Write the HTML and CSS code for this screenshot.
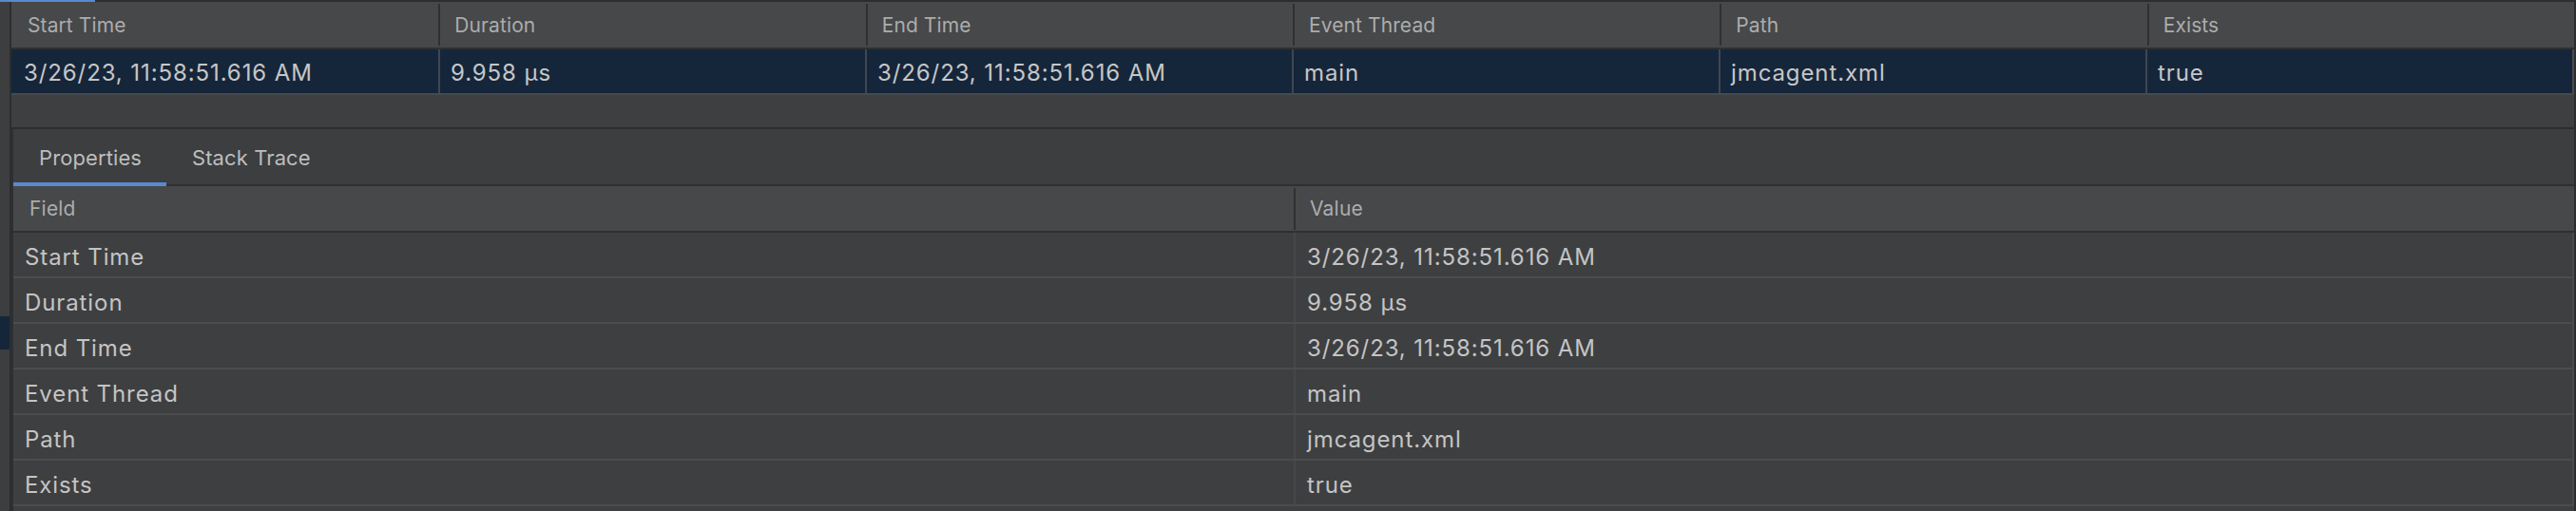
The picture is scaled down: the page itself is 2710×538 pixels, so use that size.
FILE: index.html
```html
<!DOCTYPE html>
<html>
<head>
<meta charset="utf-8">
<link rel="stylesheet" href="styles.css">
</head>
<body>
<div class="topline"><div class="topline-accent"></div></div>
<div class="frame">
  <div class="sidebar"><div class="sidebar-sel"></div></div>
  <div class="content">
    <div class="events">
      <div class="ev-head">
        <div class="ev-hcell">Start Time</div>
        <div class="ev-hcell">Duration</div>
        <div class="ev-hcell">End Time</div>
        <div class="ev-hcell">Event Thread</div>
        <div class="ev-hcell">Path</div>
        <div class="ev-hcell">Exists</div>
      </div>
      <div class="ev-row selected">
        <div class="ev-cell">3/26/23, 11:58:51.616 AM</div>
        <div class="ev-cell">9.958 µs</div>
        <div class="ev-cell">3/26/23, 11:58:51.616 AM</div>
        <div class="ev-cell">main</div>
        <div class="ev-cell">jmcagent.xml</div>
        <div class="ev-cell">true</div>
      </div>
      <div class="ev-empty"></div>
    </div>
    <div class="details">
      <div class="tabs">
        <div class="tab active">Properties</div>
        <div class="tab">Stack Trace</div>
      </div>
      <div class="props">
        <div class="p-head">
          <div class="p-hcell">Field</div>
          <div class="p-hcell">Value</div>
        </div>
        <div class="p-row"><div class="p-cell">Start Time</div><div class="p-cell">3/26/23, 11:58:51.616 AM</div></div>
        <div class="p-row"><div class="p-cell">Duration</div><div class="p-cell">9.958 µs</div></div>
        <div class="p-row"><div class="p-cell">End Time</div><div class="p-cell">3/26/23, 11:58:51.616 AM</div></div>
        <div class="p-row"><div class="p-cell">Event Thread</div><div class="p-cell">main</div></div>
        <div class="p-row"><div class="p-cell">Path</div><div class="p-cell">jmcagent.xml</div></div>
        <div class="p-row"><div class="p-cell">Exists</div><div class="p-cell">true</div></div>
      </div>
    </div>
  </div>
</div>
</body>
</html>
```

FILE: styles.css
```css
* { box-sizing: border-box; }

html, body {
  margin: 0;
  padding: 0;
}

body {
  width: 2710px;
  height: 538px;
  overflow: hidden;
  background: #3c3e40;
  font-family: Inter, "Noto Sans", "Liberation Sans", sans-serif;
  color: #c4c4c4;
}

.topline {
  height: 2px;
  background: #2b2d30;
}

.topline-accent {
  width: 100px;
  height: 2px;
  background: #5a8ad0;
}

.frame {
  display: flex;
  height: 536px;
}

.sidebar {
  width: 12px;
  flex: none;
  background: #3c3e40;
  border-right: 2px solid #2b2d30;
  padding-top: 331px;
}

.sidebar-sel {
  height: 35px;
  background: #15263b;
}

.content {
  flex: 1;
  display: flex;
  flex-direction: column;
  border-right: 2px solid #2b2d30;
  min-width: 0;
}

/* Events table */
.ev-head {
  display: grid;
  grid-template-columns: repeat(6, 1fr);
  height: 50px;
  background: #46484a;
  border-bottom: 2px solid #2f3032;
}

.ev-hcell {
  display: flex;
  align-items: center;
  padding-left: 17px;
  font-size: 21px;
  color: #acacac;
  letter-spacing: 0.1px;
}

.ev-hcell + .ev-hcell {
  background: linear-gradient(#2f3032, #2f3032) no-repeat 0 50% / 2px 44px;
}

.ev-row {
  display: grid;
  grid-template-columns: repeat(6, 1fr);
  height: 48px;
  border-bottom: 2px solid #48494b;
  border-right: 2px solid #4a4b4d;
}

.ev-row.selected {
  background: #15263b;
}

.ev-cell {
  display: flex;
  align-items: center;
  padding-left: 13px;
  padding-top: 3px;
  font-size: 24px;
  color: #c6c6c6;
  letter-spacing: 0.9px;
}

.ev-cell + .ev-cell {
  border-left: 2px solid #3f4651;
  padding-left: 11px;
}

.ev-empty {
  height: 36px;
  background: #3e3f41;
  border-bottom: 2px solid #2b2d30;
}

/* Details */
.details {
  flex: 1;
  display: flex;
  flex-direction: column;
  border-left: 2px solid #2f3032;
  background: #3e3f41;
}

.tabs {
  display: flex;
  height: 60px;
  background: #3c3e40 linear-gradient(#2f3032, #2f3032) no-repeat 0 100% / 100% 2px;
}

.tab {
  display: flex;
  align-items: center;
  padding: 0 24px 0 27px;
  font-size: 22px;
  color: #bdbdbd;
  letter-spacing: 0.1px;
}

.tab.active {
  width: 161px;
  border-bottom: 4px solid #5a8ad0;
  padding-top: 4px;
}

.props {
  display: flex;
  flex-direction: column;
}

.p-head {
  display: grid;
  grid-template-columns: 1347px 1fr;
  height: 49px;
  background: #46484a;
  border-bottom: 2px solid #2f3032;
}

.p-hcell {
  display: flex;
  align-items: center;
  padding-left: 17px;
  font-size: 21px;
  color: #acacac;
  letter-spacing: 0.2px;
}

.p-hcell + .p-hcell {
  background: linear-gradient(#2f3032, #2f3032) no-repeat 0 50% / 2px 44px;
}

.p-row {
  display: grid;
  grid-template-columns: 1347px 1fr;
  height: 48px;
  border-bottom: 2px solid #4b4c4e;
  border-right: 2px solid #4a4b4d;
}

.p-cell {
  display: flex;
  align-items: center;
  padding-left: 12px;
  padding-top: 4px;
  font-size: 24px;
  color: #c4c4c4;
  letter-spacing: 0.9px;
}

.p-cell + .p-cell {
  border-left: 2px solid #464749;
  padding-left: 12px;
}
```
